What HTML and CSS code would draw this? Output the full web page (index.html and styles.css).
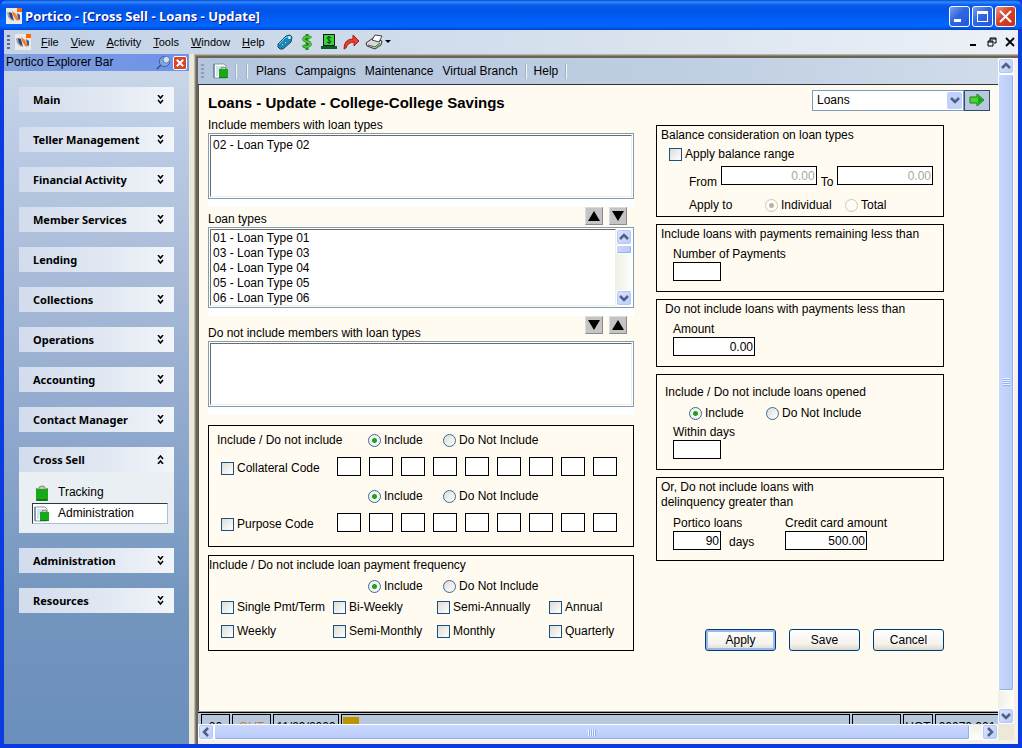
FILE: index.html
```html
<!DOCTYPE html>
<html lang="en">
<head>
<meta charset="UTF-8">
<meta name="viewport" content="width=device-width, initial-scale=1.0">
<title>Portico - [Cross Sell - Loans - Update]</title>
<link rel="stylesheet" href="styles.css">
</head>
<body>

<svg class="sprite" aria-hidden="true">
  <symbol id="i-logo" viewBox="0 0 16 16">
    <path d="M0 0h16v16H0z" fill="#eceae6"/>
    <path d="M11 0h5v4h-5z" fill="#ff6a00"/>
    <path d="M1 4l3 1 3 6-1 2-4-4z" fill="#9a9ea6"/>
    <path d="M3 4l3 1 2 8-4-4z" fill="#26468c"/>
    <path d="M6 3l4 3 3 7-3-1-3-5z" fill="#ff7a1a"/>
    <path d="M11 5l3 2v5l-2-1z" fill="#3b5c9c"/>
  </symbol>
  <symbol id="i-down" viewBox="0 0 7 9">
    <path d="M1 0l2.500 3L6 0M1 5l2.500 3L6 5" fill="none" stroke="#000" stroke-width="1.500"/>
  </symbol>
  <symbol id="i-up" viewBox="0 0 7 9">
    <path d="M1 4l2.500-3L6 4M1 9l2.500-3L6 9" fill="none" stroke="#000" stroke-width="1.500"/>
  </symbol>
  <symbol id="i-bag" viewBox="0 0 16 16">
    <path d="M5 3q0-2 3-2t3 2v2H5z" fill="#c8c2b4" stroke="#8a8478"/>
    <path d="M2 3l3 1h6l3-1v12l-1 1H3l-1-1z" fill="#18a818"/>
    <path d="M2 14v1l1 1h10l1-1v-1z" fill="#0a7d14"/>
  </symbol>
  <symbol id="i-docbag" viewBox="0 0 16 16">
    <path d="M1 1h10l2 2v12H1z" fill="#fff" stroke="#8499a8"/>
    <path d="M3 4h6M3 6h5M3 8h3M3 10h2M3 12h2" stroke="#9cc8ea"/>
    <path d="M1 1v14" stroke="#4a7080"/>
    <path d="M8 7V5q0-1 2-1t3 1v2z" fill="#c8c2b4" stroke="#8b8578"/>
    <path d="M6 6h9v9H6z" fill="#18a818"/>
    <path d="M6 14h9v1H6z" fill="#0a7d14"/>
  </symbol>
  <symbol id="i-chev-down" viewBox="0 0 10 8">
    <path d="M1 2l4 4 4-4" fill="none" stroke="#4d6185" stroke-width="2.500"/>
  </symbol>
  <symbol id="i-chev-up" viewBox="0 0 10 8">
    <path d="M1 6l4-4 4 4" fill="none" stroke="#4d6185" stroke-width="2.500"/>
  </symbol>
  <symbol id="i-chev-left" viewBox="0 0 8 10">
    <path d="M6 1L2 5l4 4" fill="none" stroke="#4d6185" stroke-width="2.500"/>
  </symbol>
  <symbol id="i-chev-right" viewBox="0 0 8 10">
    <path d="M2 1l4 4-4 4" fill="none" stroke="#4d6185" stroke-width="2.500"/>
  </symbol>
  <symbol id="i-tri-up" viewBox="0 0 12 10"><path d="M6 0l6 10H0z"/></symbol>
  <symbol id="i-tri-down" viewBox="0 0 12 10"><path d="M0 0h12L6 10z"/></symbol>
</svg>

<div class="window">
  <header class="titlebar">
    <svg class="icon16"><use href="#i-logo"/></svg>
    <span class="title-text">Portico - [Cross Sell - Loans - Update]</span>
    <div class="win-btns">
      <button class="win-btn" aria-label="Minimize"><svg viewBox="0 0 19 19"><path d="M4 12h7v3H4z" fill="#fff"/></svg></button>
      <button class="win-btn" aria-label="Maximize"><svg viewBox="0 0 19 19"><path d="M4 4h11v11H4zM5 7v7h9V7z" fill="#fff" fill-rule="evenodd"/></svg></button>
      <button class="win-btn win-close" aria-label="Close"><svg viewBox="0 0 19 19"><path d="M4 4l11 11M15 4L4 15" stroke="#fff" stroke-width="2"/></svg></button>
    </div>
  </header>

  <nav class="menubar">
    <span class="grip"></span>
    <svg class="icon16 menu-logo"><use href="#i-logo"/></svg>
    <button class="menu"><u>F</u>ile</button>
    <button class="menu"><u>V</u>iew</button>
    <button class="menu"><u>A</u>ctivity</button>
    <button class="menu"><u>T</u>ools</button>
    <button class="menu"><u>W</u>indow</button>
    <button class="menu"><u>H</u>elp</button>
    <div class="tools">
      <button class="tool" aria-label="Tag"><svg viewBox="0 0 16 16"><path d="M1 10l8-8 4-1 2 2-1 5-8 7-3 0-2-2z" fill="#1f87b8" stroke="#0c4f74"/><path d="M2 10l7-7 3 0" fill="none" stroke="#7fd0ee"/><circle cx="12.500" cy="3.500" r="1.500" fill="#e8f2f8"/><path d="M5 10l1 1M8 8l1 1" stroke="#a8e4f6"/></svg></button>
      <button class="tool" aria-label="Dollar"><svg viewBox="0 0 16 16"><path d="M12 4Q10 2 7 3 4 4 5 6q1 1 4 2 3 1 2 3-2 2-4 2-2 0-3-2M8 0v16" fill="none" stroke="#1d8a1d" stroke-width="3"/><path d="M12 4Q10 2 7 3 4 4 5 6q1 1 4 2 3 1 2 3-2 2-4 2-2 0-3-2" fill="none" stroke="#5fd045" stroke-width="1.500"/></svg></button>
      <button class="tool" aria-label="Cash"><svg viewBox="0 0 16 16"><path d="M2 0h12v12H2z" fill="#1a1a1a"/><path d="M3 1h10v10H3z" fill="#3bd03b"/><path d="M10 4Q8 2 6 4q0 1 2 2 2 1 2 2-2 2-4 0M8 2v8" fill="none" stroke="#0a4a0a"/><path d="M0 12h16v3H0z" fill="#0f5c2a"/></svg></button>
      <button class="tool" aria-label="Forward"><svg viewBox="0 0 16 16"><path d="M1 15Q1 5 10 5V1l6 6-5 5V8Q5 8 3 14z" fill="#e8402c" stroke="#a51c10"/></svg></button>
      <button class="tool tool-print" aria-label="Print"><svg viewBox="0 0 26 16"><path d="M1 9l7-5 9 3-1 4-6 4-8-3z" fill="#d8d8d8" stroke="#333"/><path d="M7 6l3-5 7 1-3 6z" fill="#fff" stroke="#444"/><path d="M3 11l7 2 5-4" fill="none" stroke="#555"/><path d="M11 14l4-3" stroke="#35a435" stroke-width="1.500"/><path d="M20 6h6l-3 3z"/></svg></button>
    </div>
    <div class="mdi-btns">
      <button class="mdi-btn" aria-label="Minimize child"><svg viewBox="0 0 10 10"><path d="M1 7h6v2H1z"/></svg></button>
      <button class="mdi-btn" aria-label="Restore child"><svg viewBox="0 0 10 10"><path d="M3 1h6v5H7M3 4V1M3 2h6M1 4h5v5H1zM1 5h5" fill="none" stroke="#000"/></svg></button>
      <button class="mdi-btn" aria-label="Close child"><svg viewBox="0 0 10 10"><path d="M1 1l8 8M9 1L1 9" stroke="#000" stroke-width="1.800"/></svg></button>
    </div>
  </nav>

  <div class="workspace">
    <aside class="explorer">
      <div class="explorer-head">
        <span class="explorer-title">Portico Explorer Bar</span>
        <button class="pin" aria-label="Pin"><svg viewBox="0 0 16 16"><circle cx="9" cy="7" r="5.500" fill="#7fa6dc" stroke="#3b5c98"/><circle cx="11" cy="5" r="3.500" fill="#d4e4f8" stroke="#5a7ab0"/><path d="M1 15l4-4" stroke="#33507e" stroke-width="1.500"/></svg></button>
        <button class="bar-close" aria-label="Close bar"><svg viewBox="0 0 13 13"><path d="M3 3l7 7M10 3l-7 7" stroke="#fff" stroke-width="2"/></svg></button>
      </div>
      <div class="groups">
        <button class="group-head">Main<svg class="dbl"><use href="#i-down"/></svg></button>
        <button class="group-head">Teller Management<svg class="dbl"><use href="#i-down"/></svg></button>
        <button class="group-head">Financial Activity<svg class="dbl"><use href="#i-down"/></svg></button>
        <button class="group-head">Member Services<svg class="dbl"><use href="#i-down"/></svg></button>
        <button class="group-head">Lending<svg class="dbl"><use href="#i-down"/></svg></button>
        <button class="group-head">Collections<svg class="dbl"><use href="#i-down"/></svg></button>
        <button class="group-head">Operations<svg class="dbl"><use href="#i-down"/></svg></button>
        <button class="group-head">Accounting<svg class="dbl"><use href="#i-down"/></svg></button>
        <button class="group-head">Contact Manager<svg class="dbl"><use href="#i-down"/></svg></button>
        <div class="group-open">
          <button class="group-head">Cross Sell<svg class="dbl"><use href="#i-up"/></svg></button>
          <div class="group-body">
            <a class="group-item" href="#tracking"><svg class="icon16"><use href="#i-bag"/></svg>Tracking</a>
            <a class="group-item selected" href="#administration"><svg class="icon16"><use href="#i-docbag"/></svg>Administration</a>
          </div>
        </div>
        <button class="group-head">Administration<svg class="dbl"><use href="#i-down"/></svg></button>
        <button class="group-head">Resources<svg class="dbl"><use href="#i-down"/></svg></button>
      </div>
    </aside>

    <div class="mdi">
      <div class="child">
        <nav class="toolbar">
          <span class="grip grip-light"></span>
          <svg class="icon16 toolbar-icon"><use href="#i-docbag"/></svg>
          <span class="sep"></span>
          <span class="sep"></span>
          <button class="menu">Plans</button>
          <button class="menu">Campaigns</button>
          <button class="menu">Maintenance</button>
          <button class="menu">Virtual Branch</button>
          <span class="sep"></span>
          <button class="menu">Help</button>
          <span class="sep"></span>
        </nav>

        <main class="page">
          <div class="page-head">
            <h1>Loans - Update - College-College Savings</h1>
            <div class="jump">
              <select class="combo" aria-label="Go to"><option>Loans</option></select>
              <span class="combo-arrow"><svg width="10" height="8"><use href="#i-chev-down"/></svg></span>
              <button class="go" aria-label="Go"><svg viewBox="0 0 16 14"><path d="M1 4h7V1l7 6-7 6v-3H1z" fill="#4fd02c" stroke="#15831a"/><path d="M9 3l5 4-5 4z" fill="#12a51c"/></svg></button>
            </div>
          </div>

          <form class="form" onsubmit="return false">
            <div class="left">
              <div class="list-head"><label for="incl">Include members with loan types</label></div>
              <div class="list-wrap">
                <div class="listbox">
                  <select id="incl" class="list list-short" multiple><option>02 - Loan Type 02</option></select>
                </div>
              </div>

              <div class="list-head list-head-mid">
                <label for="types">Loan types</label>
                <div class="movers">
                  <button class="mover" aria-label="Move up to include"><svg><use href="#i-tri-up"/></svg></button>
                  <button class="mover" aria-label="Move back down"><svg><use href="#i-tri-down"/></svg></button>
                </div>
              </div>
              <div class="list-wrap">
                <div class="listbox">
                  <select id="types" class="list list-tall" multiple>
                    <option>01 - Loan Type 01</option>
                    <option>03 - Loan Type 03</option>
                    <option>04 - Loan Type 04</option>
                    <option>05 - Loan Type 05</option>
                    <option>06 - Loan Type 06</option>
                  </select>
                  <div class="vscroll">
                    <span class="sb-btn"><svg width="10" height="8"><use href="#i-chev-up"/></svg></span>
                    <span class="sb-thumb sb-thumb-small"></span>
                    <span class="sb-rest"></span>
                    <span class="sb-btn"><svg width="10" height="8"><use href="#i-chev-down"/></svg></span>
                  </div>
                </div>
              </div>

              <div class="list-head list-head-low">
                <label for="excl">Do not include members with loan types</label>
                <div class="movers">
                  <button class="mover" aria-label="Move down to exclude"><svg><use href="#i-tri-down"/></svg></button>
                  <button class="mover" aria-label="Move back up"><svg><use href="#i-tri-up"/></svg></button>
                </div>
              </div>
              <div class="list-wrap">
                <div class="listbox">
                  <select id="excl" class="list list-short" multiple></select>
                </div>
              </div>

              <div class="box codes" role="group" aria-labelledby="codes-t">
                <div class="code-pair">
                  <span id="codes-t">Include / Do not include</span>
                  <div class="radios">
                    <label><input type="radio" name="coll" checked>Include</label>
                    <label><input type="radio" name="coll">Do Not Include</label>
                  </div>
                  <label class="code-check"><input type="checkbox">Collateral Code</label>
                  <div class="cells">
                    <input type="text" aria-label="Collateral code 1">
                    <input type="text" aria-label="Collateral code 2">
                    <input type="text" aria-label="Collateral code 3">
                    <input type="text" aria-label="Collateral code 4">
                    <input type="text" aria-label="Collateral code 5">
                    <input type="text" aria-label="Collateral code 6">
                    <input type="text" aria-label="Collateral code 7">
                    <input type="text" aria-label="Collateral code 8">
                    <input type="text" aria-label="Collateral code 9">
                  </div>
                </div>
                <div class="code-pair">
                  <span></span>
                  <div class="radios">
                    <label><input type="radio" name="purp" checked>Include</label>
                    <label><input type="radio" name="purp">Do Not Include</label>
                  </div>
                  <label class="code-check"><input type="checkbox">Purpose Code</label>
                  <div class="cells">
                    <input type="text" aria-label="Purpose code 1">
                    <input type="text" aria-label="Purpose code 2">
                    <input type="text" aria-label="Purpose code 3">
                    <input type="text" aria-label="Purpose code 4">
                    <input type="text" aria-label="Purpose code 5">
                    <input type="text" aria-label="Purpose code 6">
                    <input type="text" aria-label="Purpose code 7">
                    <input type="text" aria-label="Purpose code 8">
                    <input type="text" aria-label="Purpose code 9">
                  </div>
                </div>
              </div>

              <div class="box freq" role="group" aria-labelledby="freq-t">
                <div id="freq-t">Include / Do not include loan payment frequency</div>
                <div class="radios freq-radios">
                  <label><input type="radio" name="freq" checked>Include</label>
                  <label><input type="radio" name="freq">Do Not Include</label>
                </div>
                <div class="freq-grid">
                  <label><input type="checkbox">Single Pmt/Term</label>
                  <label><input type="checkbox">Bi-Weekly</label>
                  <label><input type="checkbox">Semi-Annually</label>
                  <label><input type="checkbox">Annual</label>
                  <label><input type="checkbox">Weekly</label>
                  <label><input type="checkbox">Semi-Monthly</label>
                  <label><input type="checkbox">Monthly</label>
                  <label><input type="checkbox">Quarterly</label>
                </div>
              </div>
            </div>

            <div class="right">
              <div class="box balance" role="group" aria-labelledby="bal-t">
                <div id="bal-t">Balance consideration on loan types</div>
                <label class="bal-check"><input type="checkbox">Apply balance range</label>
                <div class="range">
                  <label for="from">From</label>
                  <input type="text" id="from" class="money" value="0.00" disabled>
                  <label for="to">To</label>
                  <input type="text" id="to" class="money" value="0.00" disabled>
                </div>
                <div class="apply-to">
                  <span class="apply-label">Apply to</span>
                  <label><input type="radio" name="applyto" checked disabled>Individual</label>
                  <label><input type="radio" name="applyto" disabled>Total</label>
                </div>
              </div>

              <div class="box" role="group" aria-labelledby="rem-t">
                <div id="rem-t">Include loans with payments remaining less than</div>
                <div class="field">
                  <label for="numpay">Number of Payments</label>
                  <input type="text" id="numpay" class="w-short">
                </div>
              </div>

              <div class="box" role="group" aria-labelledby="amt-t">
                <div id="amt-t" class="indent">Do not include loans with payments less than</div>
                <div class="field">
                  <label for="amount">Amount</label>
                  <input type="text" id="amount" class="w-mid" value="0.00">
                </div>
              </div>

              <div class="box opened" role="group" aria-labelledby="open-t">
                <div id="open-t" class="indent">Include / Do not include loans opened</div>
                <div class="radios opened-radios">
                  <label><input type="radio" name="opened" checked>Include</label>
                  <label><input type="radio" name="opened">Do Not Include</label>
                </div>
                <div class="field field-tight">
                  <label for="within">Within days</label>
                  <input type="text" id="within" class="w-short">
                </div>
              </div>

              <div class="box delinq" role="group" aria-labelledby="del-t">
                <div id="del-t">Or, Do not include loans with<br>delinquency greater than</div>
                <div class="delinq-row">
                  <div class="field">
                    <label for="ploans">Portico loans</label>
                    <div class="days-row">
                      <input type="text" id="ploans" class="w-short" value="90">
                      <span>days</span>
                    </div>
                  </div>
                  <div class="field">
                    <label for="cc">Credit card amount</label>
                    <input type="text" id="cc" class="w-mid" value="500.00">
                  </div>
                </div>
              </div>

              <div class="actions">
                <button class="btn btn-default">Apply</button>
                <button class="btn">Save</button>
                <button class="btn">Cancel</button>
              </div>
            </div>
          </form>
        </main>

        <footer class="status">
          <span class="cell cell-num">20</span>
          <span class="cell cell-out">OUT</span>
          <span class="cell cell-date">11/09/2009</span>
          <span class="cell cell-msg"><i class="gold"></i></span>
          <span class="cell cell-blank"></span>
          <span class="cell cell-host">HOT</span>
          <span class="cell cell-id">00070 001</span>
        </footer>
      </div>

      <div class="vscroll vscroll-main">
        <span class="sb-btn"><svg width="10" height="8"><use href="#i-chev-up"/></svg></span>
        <span class="sb-thumb sb-thumb-v"><i class="lines-v"></i></span>
        <span class="sb-rest sb-rest-v"></span>
        <span class="sb-btn"><svg width="10" height="8"><use href="#i-chev-down"/></svg></span>
      </div>

      <div class="hscroll">
        <span class="sb-btn"><svg width="8" height="10"><use href="#i-chev-left"/></svg></span>
        <span class="sb-thumb sb-thumb-h"><i class="lines-h"></i></span>
        <span class="sb-rest-h"></span>
        <span class="sb-btn"><svg width="8" height="10"><use href="#i-chev-right"/></svg></span>
      </div>
      <div class="sb-corner"></div>
    </div>
  </div>
</div>

</body>
</html>
```
FILE: styles.css
```css
*, *::before, *::after { box-sizing: border-box; margin: 0; padding: 0; }
body {
  font-family: 'Liberation Sans', Arial, sans-serif;
  font-size: 12px;
  line-height: 15px;
  color: #000;
  background: #0831d9;
}
button, input, select, option { font: inherit; color: inherit; }
button { border: none; background: none; }
svg { display: block; flex-shrink: 0; }
label { white-space: nowrap; }
.sprite { position: absolute; width: 0; height: 0; }
.icon16 { width: 16px; height: 16px; }

.window {
  display: flex;
  flex-direction: column;
  height: 100vh;
  min-height: 748px;
  border: solid #0a3ce0;
  border-width: 0 4px 4px;
}

/* title bar */
.titlebar {
  display: flex;
  align-items: center;
  gap: 3px;
  height: 30px;
  margin: 0 -4px;
  padding: 2px 6px 0;
  border-radius: 7px 7px 0 0;
  background: linear-gradient(#0a48d0, #2f8cff 2px, #0a5cf0 5px, #0054e3 10px, #0060fa 20px, #0066ff 26px, #0043cf);
}
.title-text {
  flex: 1;
  font-family: 'Open Sans', sans-serif;
  font-size: 13px;
  font-weight: 700;
  color: #fff;
  text-shadow: 1px 1px #0f1089;
}
.win-btns { display: flex; gap: 2px; }
.win-btn {
  width: 21px;
  height: 21px;
  border: 1px solid #fff;
  border-radius: 3px;
  background: linear-gradient(135deg, #7a9df0, #2f66e4 45%, #2656d8);
}
.win-close { background: linear-gradient(135deg, #e89a80, #d8402a 45%, #c8301a); }

/* menu bar */
.menubar {
  display: flex;
  align-items: center;
  height: 24px;
  padding: 0 3px;
  background: linear-gradient(90deg, #c3d2e6, #d3dfec 50%, #edf1f7);
}
.menubar .menu { font-size: 11px; margin-right: 12px; }
.grip {
  width: 3px;
  height: 15px;
  background: repeating-linear-gradient(#5c6c84 0 2px, transparent 2px 4px);
}
.grip-light { background: repeating-linear-gradient(#8d9db5 0 2px, transparent 2px 4px); }
.menu-logo { margin: 0 10px 0 5px; }
.tools { display: flex; gap: 6px; }
.tool svg { width: 16px; height: 16px; }
.tool-print svg { width: 26px; }
.mdi-btns { display: flex; gap: 8px; margin-left: auto; }
.mdi-btn svg { width: 10px; height: 10px; }

.workspace { display: flex; flex: 1; min-height: 0; }

/* explorer bar */
.explorer {
  width: 185px;
  flex-shrink: 0;
  background: linear-gradient(#ccd9e8, #bccce5 12%, #a8bad7 33%, #8fa8cd 55%, #7396be 80%, #6b8fbc);
}
.explorer-head {
  display: flex;
  align-items: center;
  height: 17px;
  padding-left: 2px;
  background: linear-gradient(90deg, #85a2dc, #7596e4 60%, #6f92ec);
}
.explorer-title { flex: 1; }
.pin svg { width: 15px; height: 15px; margin-right: 2px; }
.bar-close {
  width: 14px;
  height: 14px;
  margin-right: 2px;
  border: 1px solid #fff;
  border-radius: 2px;
  background: #dc4428;
}
.groups { display: flex; flex-direction: column; gap: 15px; padding: 16px 15px; }
.group-head {
  display: flex;
  align-items: center;
  justify-content: space-between;
  width: 100%;
  height: 25px;
  padding: 0 10px 0 14px;
  font-family: 'Noto Sans', sans-serif;
  font-size: 11px;
  font-weight: 700;
  background: linear-gradient(90deg, #d3dced, #e1e8f2 55%, #f2f5fa);
}
.dbl { width: 7px; height: 9px; }
.group-body { padding: 10px 6px 9px 13px; background: #e9eff3; }
.group-item {
  display: flex;
  align-items: center;
  gap: 8px;
  height: 21px;
  padding-left: 1px;
  border: 1px solid transparent;
  color: #000;
  text-decoration: none;
}
.selected { background: #fff; border-color: #303848 #a8bfdd #a8bfdd #303848; }

/* child window */
.mdi {
  flex: 1;
  min-width: 0;
  display: grid;
  grid-template-columns: minmax(0, 1fr) 16px;
  grid-template-rows: minmax(0, 1fr) 16px;
  margin-left: 5px;
  padding: 3px 4px 4px 3px;
  background: #f4f2ea;
  border-left: 1px solid #bdb9a8;
  border-top: 1px solid #b8b4a4;
  box-shadow: -5px 0 #ece9d8, inset 1px 1px #8a8678, inset 3px 3px #68655a;
}
.child {
  display: flex;
  flex-direction: column;
  min-height: 0;
  overflow: hidden;
  background: #fffbf0;
}
.toolbar {
  display: flex;
  align-items: center;
  height: 27px;
  flex-shrink: 0;
  padding-left: 3px;
  border-bottom: 1px solid #303438;
  background: linear-gradient(90deg, #b4c6de, #bfcee2 60%, #d0dcea);
}
.toolbar-icon { margin: 0 2px 0 9px; }
.toolbar .menu { margin: 0 6px 0 3px; }
.sep { width: 1px; height: 15px; margin: 0 5px; background: #f4f4f0; box-shadow: -1px 0 #9fb0c8; }
.menu + .sep { margin: 0 4px 0 2px; }

.page {
  flex: 1;
  min-height: 0;
  padding: 4px 8px 0 9px;
  border-left: 1px solid #58564c;
}
.page-head { display: flex; align-items: center; justify-content: space-between; height: 22px; margin-bottom: 7px; }
h1 { font-size: 15px; font-weight: 700; padding-top: 4px; }
.jump { display: flex; width: 178px; position: relative; }
.combo {
  flex: 1;
  min-width: 0;
  height: 21px;
  padding: 0 4px;
  border: 1px solid #7f9db9;
  appearance: none;
  background: #fff;
}
/* arrow lies over the select */
.combo-arrow {
  position: absolute;
  right: 28px;
  top: 2px;
  display: flex;
  align-items: center;
  justify-content: center;
  width: 15px;
  height: 17px;
  border-radius: 2px;
  background: #c1d1fa;
  pointer-events: none;
}
.go {
  display: flex;
  align-items: center;
  justify-content: center;
  width: 26px;
  height: 21px;
  border: 1px solid #2f4a74;
  background: #b8c8dc;
}
.go svg { width: 16px; height: 14px; }

.form {
  display: grid;
  grid-template-columns: minmax(0, 426fr) minmax(0, 288fr);
  column-gap: 22px;
  margin-right: 46px;
}

/* lists */
.list-head { display: flex; align-items: flex-end; justify-content: space-between; }
.list-head-mid { height: 20px; }
.list-head-low { height: 25px; }
.movers { display: flex; gap: 6px; align-self: flex-start; padding-right: 7px; }
.mover {
  display: flex;
  align-items: center;
  justify-content: center;
  width: 18px;
  height: 18px;
  background: #c4c4c4;
  border: 1px solid;
  border-color: #dcdcdc #8c8c8c #8c8c8c #dcdcdc;
}
.mover svg { width: 12px; height: 10px; }
.list-wrap { padding-bottom: 8px; background: #fff; }
.listbox { display: flex; border: 1px solid #7f9db9; padding: 1px; background: #fff; }
.list {
  flex: 1;
  min-width: 0;
  border: 1px solid;
  border-color: #6e6c62 #f1efe2 #f1efe2 #6e6c62;
  border-radius: 0;
  padding: 2px 0 0;
  background: #fff;
  overflow: hidden;
  outline: none;
}
.list option { min-height: 15px; line-height: 15px; padding: 0 2px; }
.list-short { height: 62px; }
.list-tall { height: 77px; padding-top: 1px; }

/* scrollbars */
.vscroll { display: flex; flex-direction: column; width: 16px; background: linear-gradient(90deg, #f0f0e8, #fefefb); }
.hscroll { display: flex; height: 16px; background: linear-gradient(#f0f0e8, #fefefb); }
.sb-btn {
  display: flex;
  align-items: center;
  justify-content: center;
  width: 16px;
  height: 16px;
  flex-shrink: 0;
  border: 1px solid #fff;
  border-radius: 3px;
  background: linear-gradient(135deg, #dce6fe, #b9cbf8);
  box-shadow: inset 0 0 0 1px #b4c8f6;
}
.sb-thumb {
  display: flex;
  align-items: center;
  justify-content: center;
  border: 1px solid #fff;
  border-radius: 2px;
  background: linear-gradient(90deg, #c8d7fd, #b8ccf8);
  box-shadow: inset -1px -1px #94b0e6;
}
.sb-thumb-small { height: 9px; }
.sb-rest { flex: 1; }
.sb-thumb-v { flex: 614; }
.sb-rest-v { flex: 17; }
.sb-thumb-h { flex: 754; background: linear-gradient(#cad8fe, #b6c9f8); }
.sb-rest-h { flex: 12; }
.lines-v { width: 7px; height: 8px; background: repeating-linear-gradient(#eef4fe 0 1px, #8cb0f8 1px 2px); }
.lines-h { width: 8px; height: 7px; background: repeating-linear-gradient(90deg, #eef4fe 0 1px, #8cb0f8 1px 2px); }
.sb-corner { background: #ece9d8; }

/* group boxes */
.box { border: 1px solid #000; padding: 2px 4px; }
.box label { display: flex; align-items: center; }
input[type="text"] {
  height: 19px;
  border: 1px solid #000;
  border-radius: 0;
  padding: 1px 1px 0;
  background: #fff;
  text-align: right;
}
input[type="text"]:disabled { color: #aca899; }
input[type="checkbox"], input[type="radio"] {
  appearance: none;
  width: 13px;
  height: 13px;
  flex-shrink: 0;
  margin-right: 3px;
  border: 1px solid #1c5180;
  background: linear-gradient(135deg, #dcdcd7, #fff);
}
input[type="radio"] { border-radius: 50%; border-color: #3a6a96; }
input[type="radio"]:checked { background: radial-gradient(circle, #21a121 0 2px, #f4f4f0 3px); }
input[type="radio"]:disabled { border-color: #cac8bb; background: #fffdf6; }
input[type="radio"]:disabled:checked { background: radial-gradient(circle, #b8b6aa 0 2px, #fffdf6 3px); }
.radios { display: flex; }
.radios label { width: 75px; }

.codes {
  display: flex;
  flex-direction: column;
  gap: 10px;
  margin-top: 10px;
  padding: 4px 8px 14px;
}
.code-pair {
  display: grid;
  grid-template-columns: 120px minmax(0, 1fr);
  grid-auto-rows: 20px;
  row-gap: 6px;
  align-items: center;
  white-space: nowrap;
}
.code-pair .radios { padding-left: 31px; }
.box .code-check { padding-left: 4px; align-self: end; }
.cells { display: flex; gap: 8px; }
.cells input { width: 24px; min-width: 0; }

.freq { margin-top: 8px; padding: 2px 0 11px; }
.freq-radios { padding-left: 159px; margin-top: 6px; }
.freq-grid {
  display: grid;
  grid-template-columns: 112fr 104fr 112fr 84fr;
  row-gap: 9px;
  margin-top: 6px;
  padding-left: 12px;
}

.right { display: flex; flex-direction: column; gap: 7px; padding-top: 7px; }
.balance { padding-bottom: 3px; }
.bal-check { padding-left: 8px; margin-top: 4px; }
.range { display: flex; align-items: flex-start; gap: 4px; height: 24px; margin-top: 4px; padding: 0 6px 0 28px; }
.range label { align-self: flex-end; }
.money { flex: 1; min-width: 0; }
.apply-to { display: flex; align-items: center; margin-top: 8px; padding-left: 28px; }
.apply-label { width: 76px; }
.apply-to label { width: 80px; }
.field { display: flex; flex-direction: column; align-items: flex-start; margin-top: 5px; padding: 0 0 8px 12px; }
.indent { padding-left: 4px; }
.w-short { width: 48px; }
.w-mid { width: 82px; }
.opened { padding-top: 10px; }
.opened-radios { padding-left: 28px; margin-top: 6px; }
.opened-radios label { width: 77px; }
.field-tight { margin-top: 4px; }
.delinq-row { display: grid; grid-template-columns: 112px 1fr; }
.days-row { display: flex; align-items: flex-end; gap: 8px; }
.delinq .field { margin-top: 6px; }
.actions { display: flex; justify-content: flex-end; gap: 13px; margin-top: 61px; }
.btn {
  width: 71px;
  height: 22px;
  border: 1px solid #003c74;
  border-radius: 3px;
  background: linear-gradient(#fff, #f3f2ec 70%, #dcd8cc);
}
.btn-default { box-shadow: inset 0 0 0 2px #9ab8ee; }

/* status bar, cut off by the horizontal scrollbar */
.status {
  display: flex;
  align-items: flex-start;
  gap: 2px;
  height: 12px;
  flex-shrink: 0;
  overflow: hidden;
  padding: 1px 0 0 3px;
  border-top: 1px solid #000;
  background: #b8c8dc;
  box-shadow: 0 -1px #a09e94;
}
.cell { height: 22px; flex-shrink: 0; padding-top: 5px; border: 1px solid #000; text-align: center; white-space: nowrap; }
.cell-num { width: 29px; }
.cell-out { width: 39px; color: #c08040; }
.cell-date { width: 66px; }
.cell-msg { flex: 1; padding: 2px 1px; }
.gold { display: block; width: 16px; height: 16px; background: #bb9400; }
.cell-blank { width: 49px; }
.cell-host { width: 30px; }
.cell-id { width: 63px; border-right: none; }
```
